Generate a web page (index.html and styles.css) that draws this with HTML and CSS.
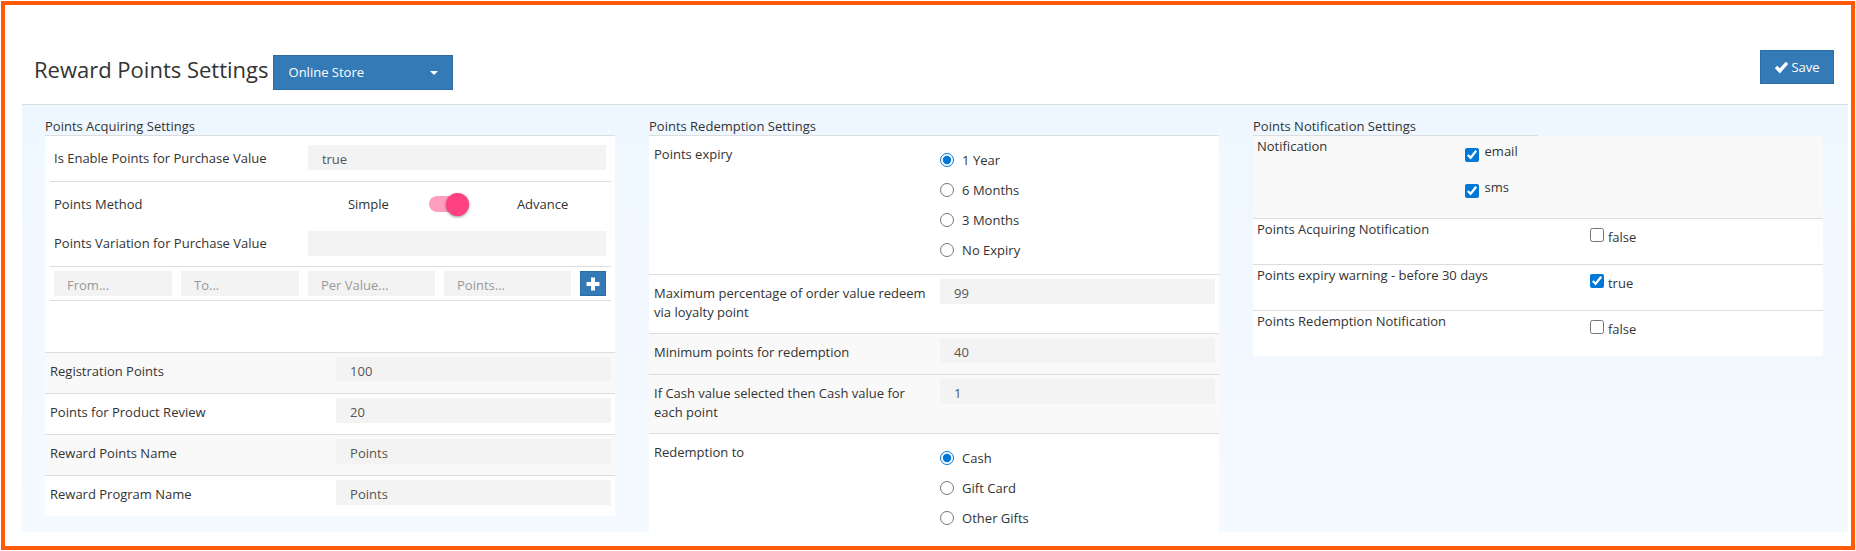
FILE: index.html
```html
<!DOCTYPE html>
<html lang="en">
<head>
    <meta charset="UTF-8">
    <meta name="viewport" content="width=device-width, initial-scale=1.0">
    <title>Reward Points Settings</title>
    <link rel="stylesheet" href="styles.css">
</head>
<body>
    <form class="page">
        <header class="page-header">
            <h1>Reward Points Settings</h1>
            <div class="store-select">
                <select aria-label="Store">
                    <option>Online Store</option>
                </select>
            </div>
            <button class="btn btn-save" type="button">
                <svg width="15" height="13" viewBox="0 0 13 12" fill="#fff"><path d="M0.3 6.6 L2.5 4.4 L4.9 6.7 L10.4 0.6 L12.8 2.6 L5 11.5 Z"/></svg>
                Save
            </button>
        </header>

        <main class="content">
            <section class="column">
                <h2>Points Acquiring Settings</h2>
                <div class="panel">
                    <div class="acquire">
                        <div class="acquire-row enable-row">
                            <label for="enable">Is Enable Points for Purchase Value</label>
                            <input class="field" id="enable" type="text" value="true">
                        </div>
                        <div class="acquire-row method-row">
                            <label for="method">Points Method</label>
                            <div class="method">
                                <span>Simple</span>
                                <input class="switch" id="method" type="checkbox" checked>
                                <span>Advance</span>
                            </div>
                        </div>
                        <div class="acquire-row variation-row">
                            <label for="variation">Points Variation for Purchase Value</label>
                            <input class="field" id="variation" type="text">
                        </div>
                        <div class="range-row">
                            <input class="field" type="text" placeholder="From..." aria-label="From">
                            <input class="field" type="text" placeholder="To..." aria-label="To">
                            <input class="field" type="text" placeholder="Per Value..." aria-label="Per Value">
                            <input class="field" type="text" placeholder="Points..." aria-label="Points">
                            <button class="btn btn-add" type="button" aria-label="Add">
                                <svg width="14" height="14" viewBox="0 0 14 14" fill="#fff"><path d="M5 0.5h4V5h4.5v4H9v4.5H5V9H0.5V5H5z"/></svg>
                            </button>
                        </div>
                    </div>
                    <div class="row shaded">
                        <label for="registration">Registration Points</label>
                        <input class="field" id="registration" type="text" value="100">
                    </div>
                    <div class="row">
                        <label for="review">Points for Product Review</label>
                        <input class="field" id="review" type="text" value="20">
                    </div>
                    <div class="row shaded">
                        <label for="points-name">Reward Points Name</label>
                        <input class="field" id="points-name" type="text" value="Points">
                    </div>
                    <div class="row">
                        <label for="program-name">Reward Program Name</label>
                        <input class="field" id="program-name" type="text" value="Points">
                    </div>
                </div>
            </section>

            <section class="column">
                <h2>Points Redemption Settings</h2>
                <div class="panel">
                    <div class="row radio-row" role="radiogroup" aria-labelledby="expiry-label">
                        <span class="label" id="expiry-label">Points expiry</span>
                        <div class="options">
                            <label><input type="radio" name="expiry" checked>1 Year</label>
                            <label><input type="radio" name="expiry">6 Months</label>
                            <label><input type="radio" name="expiry">3 Months</label>
                            <label><input type="radio" name="expiry">No Expiry</label>
                        </div>
                    </div>
                    <div class="row">
                        <label for="max-percent">Maximum percentage of order value redeem via loyalty point</label>
                        <input class="field" id="max-percent" type="text" value="99">
                    </div>
                    <div class="row shaded">
                        <label for="min-points">Minimum points for redemption</label>
                        <input class="field" id="min-points" type="text" value="40">
                    </div>
                    <div class="row shaded">
                        <label for="cash-value">If Cash value selected then Cash value for each point</label>
                        <input class="field" id="cash-value" type="text" value="1">
                    </div>
                    <div class="row radio-row" role="radiogroup" aria-labelledby="redeem-label">
                        <span class="label" id="redeem-label">Redemption to</span>
                        <div class="options">
                            <label><input type="radio" name="redeem" checked>Cash</label>
                            <label><input type="radio" name="redeem">Gift Card</label>
                            <label><input type="radio" name="redeem">Other Gifts</label>
                        </div>
                    </div>
                </div>
            </section>

            <section class="column">
                <h2 class="short-line">Points Notification Settings</h2>
                <div class="panel">
                    <div class="channels shaded" role="group" aria-labelledby="channel-label">
                        <span id="channel-label">Notification</span>
                        <div class="channel-list">
                            <label><input type="checkbox" checked>email</label>
                            <label><input type="checkbox" checked>sms</label>
                        </div>
                    </div>
                    <div class="notify-row">
                        <span id="acquiring-label">Points Acquiring Notification</span>
                        <label><input type="checkbox" aria-describedby="acquiring-label">false</label>
                    </div>
                    <div class="notify-row">
                        <span id="warning-label">Points expiry warning - before 30 days</span>
                        <label><input type="checkbox" aria-describedby="warning-label" checked>true</label>
                    </div>
                    <div class="notify-row">
                        <span id="redemption-label">Points Redemption Notification</span>
                        <label><input type="checkbox" aria-describedby="redemption-label">false</label>
                    </div>
                </div>
            </section>
        </main>
    </form>
</body>
</html>
```
FILE: styles.css
```css
* {
    box-sizing: border-box;
}

body {
    margin: 0;
    padding: 1px;
    height: 100vh;
    background: #fff;
    color: #333;
    font: 13px/19px "Segoe UI", "Open Sans", sans-serif;
}

input, select, button {
    font: inherit;
    margin: 0;
}

input[type="radio"], input[type="checkbox"] {
    flex: none;
    width: 14px;
    height: 14px;
    accent-color: #0078d7;
}

.page {
    display: flex;
    flex-direction: column;
    height: 100%;
    padding: 0 3px 14px 17px;
    border: 4px solid #ff5a0a;
}

.page-header {
    display: flex;
    align-items: flex-start;
    flex: none;
    height: 100px;
    padding: 45px 14px 0 12px;
    border-bottom: 1px solid #ddd;
}

h1 {
    margin: 0 4px 0 0;
    font-size: 22px;
    line-height: 38px;
    font-weight: 500;
}

.store-select {
    position: relative;
    margin-top: 5px;
}

.store-select select {
    appearance: none;
    width: 180px;
    height: 35px;
    padding: 0 15px;
    border: 1px solid #2e6da4;
    border-radius: 0;
    background: #337ab7;
    color: #fff;
}

/* caret on top of the select */
.store-select::after {
    content: "";
    position: absolute;
    top: 16px;
    right: 15px;
    border: 4px solid transparent;
    border-top-color: #fff;
    border-bottom: 0;
    pointer-events: none;
}

.btn {
    display: flex;
    align-items: center;
    justify-content: center;
    padding: 0;
    border: 1px solid #2e6da4;
    background: #337ab7;
    color: #fff;
}

.btn-save {
    gap: 2px;
    width: 74px;
    height: 34px;
    margin-left: auto;
}

.btn-add {
    height: 25px;
}

.content {
    display: grid;
    grid-template-columns: repeat(3, minmax(0, 1fr));
    gap: 34px;
    flex: 1;
    min-height: 0;
    padding: 12px 25px 0 23px;
    overflow: hidden;
    background: linear-gradient(#eef7ff, #f3f8ff 60%, #f4faff);
}

h2 {
    margin: 0;
    font-size: 13px;
    line-height: 18px;
    font-weight: 400;
    border-bottom: 1px solid #ddd;
}

h2.short-line {
    width: 50%;
}

.panel {
    background: #fff;
}

.field {
    width: 100%;
    min-width: 0;
    height: 25px;
    padding: 2px 14px 0;
    border: 0;
    background: #f3f3f3;
    color: #555;
}

.field::placeholder {
    color: #999;
}

.shaded {
    background: #f9f9f9;
}

/* purchase value block */
.acquire {
    height: 216px;
    padding: 0 4px 0 5px;
}

.acquire-row {
    display: grid;
    grid-template-columns: 46% 54%;
    align-items: center;
    padding: 0 5px 0 4px;
}

.enable-row {
    height: 46px;
    padding-bottom: 2px;
    border-bottom: 1px solid #ddd;
}

.enable-row label {
    padding-top: 2px;
}

.method-row {
    height: 44px;
}

.variation-row {
    height: 41px;
    padding-bottom: 6px;
    border-bottom: 1px solid #ddd;
}

.method {
    display: flex;
    align-items: center;
    gap: 40px;
    padding-left: 40px;
}

.switch[type="checkbox"] {
    appearance: none;
    position: relative;
    width: 40px;
    height: 16px;
    margin-right: 8px;
    border-radius: 8px;
    background: #ff9fbf;
}

.switch::after {
    content: "";
    position: absolute;
    top: -3px;
    right: 0;
    width: 23px;
    height: 23px;
    border-radius: 50%;
    background: #ff4081;
    box-shadow: 0 1px 3px rgba(0, 0, 0, 0.4);
}

.range-row {
    display: grid;
    grid-template-columns: 118fr 118fr 127fr 127fr 26px;
    gap: 9px;
    padding: 4px 5px 4px 4px;
    border-bottom: 1px solid #ddd;
}

.range-row .field {
    padding: 2px 13px 0;
}

/* label + field rows */
.row {
    display: grid;
    grid-template-columns: 51% 49%;
    align-items: start;
    padding: 4px 4px 11px 5px;
    border-top: 1px solid #ddd;
}

.row > label, .row > .label {
    padding: 5px 12px 0 0;
}

.radio-row {
    padding-bottom: 9px;
}

.column h2 + .panel > .row:first-child {
    border-top: 0;
}

.options {
    display: grid;
    grid-auto-rows: 30px;
    padding: 5px 0 0;
}

.options label {
    display: flex;
    align-items: center;
    gap: 8px;
}

.channels {
    display: grid;
    grid-template-columns: 37% 1fr;
    height: 82px;
    padding: 1px 5px 1px 4px;
}

.channel-list label {
    display: flex;
    align-items: flex-start;
    gap: 6px;
    height: 36px;
    padding-top: 5px;
}

.channel-list input {
    margin-top: 6px;
}

.notify-row {
    display: grid;
    grid-template-columns: 59% 1fr;
    column-gap: 2px;
    height: 46px;
    padding: 1px 5px 1px 4px;
    border-top: 1px solid #ddd;
}

.notify-row label {
    display: flex;
    align-items: flex-start;
    gap: 4px;
    padding-top: 8px;
}
```
